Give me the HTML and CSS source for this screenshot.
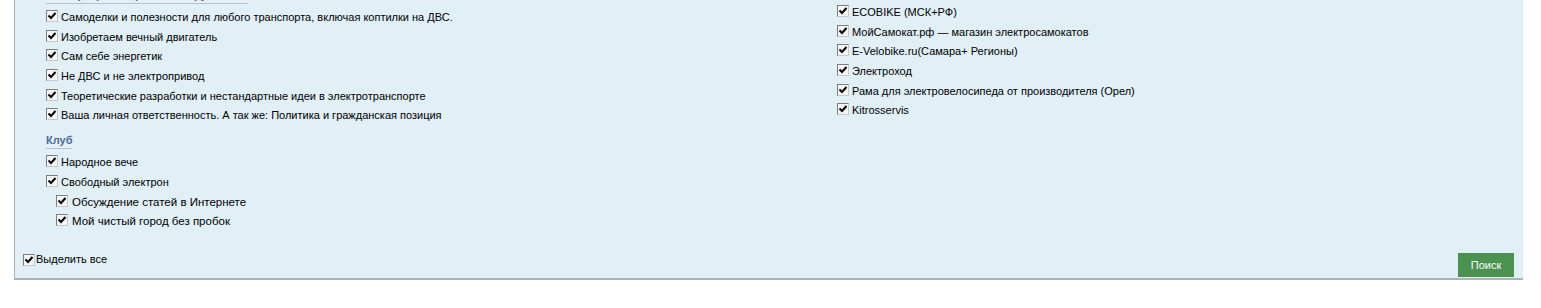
FILE: index.html
```html
<!DOCTYPE html>
<html>
<head>
  <title>Поиск по разделам</title>
  <link rel="stylesheet" href="styles.css">
</head>
<body>
  <form class="search-box">
    <div class="columns">
      <div class="col">
        <div class="group-title">Электротранспорт своими руками</div>
        <div class="group-list">
          <label class="row"><span class="check"><svg viewBox="0 0 10 10"><path d="M1.5 4.5 L4 7 L8.5 2"/></svg></span>Самоделки и полезности для любого транспорта, включая коптилки на ДВС.</label>
          <label class="row"><span class="check"><svg viewBox="0 0 10 10"><path d="M1.5 4.5 L4 7 L8.5 2"/></svg></span>Изобретаем вечный двигатель</label>
          <label class="row"><span class="check"><svg viewBox="0 0 10 10"><path d="M1.5 4.5 L4 7 L8.5 2"/></svg></span>Сам себе энергетик</label>
          <label class="row"><span class="check"><svg viewBox="0 0 10 10"><path d="M1.5 4.5 L4 7 L8.5 2"/></svg></span>Не ДВС и не электропривод</label>
          <label class="row"><span class="check"><svg viewBox="0 0 10 10"><path d="M1.5 4.5 L4 7 L8.5 2"/></svg></span>Теоретические разработки и нестандартные идеи в электротранспорте</label>
          <label class="row"><span class="check"><svg viewBox="0 0 10 10"><path d="M1.5 4.5 L4 7 L8.5 2"/></svg></span>Ваша личная ответственность. А так же: Политика и гражданская позиция</label>
        </div>

        <div class="group-title club">Клуб</div>
        <div class="group-list">
          <label class="row"><span class="check"><svg viewBox="0 0 10 10"><path d="M1.5 4.5 L4 7 L8.5 2"/></svg></span>Народное вече</label>
          <label class="row"><span class="check"><svg viewBox="0 0 10 10"><path d="M1.5 4.5 L4 7 L8.5 2"/></svg></span>Свободный электрон</label>
          <label class="row sub"><span class="check"><svg viewBox="0 0 10 10"><path d="M1.5 4.5 L4 7 L8.5 2"/></svg></span>Обсуждение статей в Интернете</label>
          <label class="row sub"><span class="check"><svg viewBox="0 0 10 10"><path d="M1.5 4.5 L4 7 L8.5 2"/></svg></span>Мой чистый город без пробок</label>
        </div>
      </div>

      <div class="col col-right">
        <div class="group-list">
          <label class="row"><span class="check"><svg viewBox="0 0 10 10"><path d="M1.5 4.5 L4 7 L8.5 2"/></svg></span>ECOBIKE (МСК+РФ)</label>
          <label class="row"><span class="check"><svg viewBox="0 0 10 10"><path d="M1.5 4.5 L4 7 L8.5 2"/></svg></span>МойСамокат.рф — магазин электросамокатов</label>
          <label class="row"><span class="check"><svg viewBox="0 0 10 10"><path d="M1.5 4.5 L4 7 L8.5 2"/></svg></span>E-Velobike.ru(Самара+ Регионы)</label>
          <label class="row"><span class="check"><svg viewBox="0 0 10 10"><path d="M1.5 4.5 L4 7 L8.5 2"/></svg></span>Электроход</label>
          <label class="row"><span class="check"><svg viewBox="0 0 10 10"><path d="M1.5 4.5 L4 7 L8.5 2"/></svg></span>Рама для электровелосипеда от производителя (Орел)</label>
          <label class="row"><span class="check"><svg viewBox="0 0 10 10"><path d="M1.5 4.5 L4 7 L8.5 2"/></svg></span>Kitrosservis</label>
        </div>
      </div>
    </div>

    <div class="footer">
      <label class="select-all"><span class="check"><svg viewBox="0 0 10 10"><path d="M1.5 4.5 L4 7 L8.5 2"/></svg></span>Выделить все</label>
      <button type="button" class="search-button">Поиск</button>
    </div>
  </form>
</body>
</html>
```

FILE: styles.css
```css
body {
  margin: 0;
  background-color: #fff;
  font-family: "Liberation Sans", Arial, sans-serif;
  font-size: 11px;
  color: #000;
  overflow: hidden;
}

.search-box {
  box-sizing: border-box;
  width: 1509px;
  margin: -20px 0 0 14px;
  padding: 8px 9px 1px 8px;
  background-color: #e1eff7;
  border-left: 1px solid #a9b3bb;
  border-bottom: 2px solid #a9b3bb;
}

.columns {
  display: grid;
  grid-template-columns: 791px 1fr;
  padding-left: 23px;
}

.group-title {
  display: inline-block;
  font-weight: bold;
  color: #4b6b9b;
  line-height: 14px;
  padding-bottom: 1px;
  border-bottom: 1px solid #b7c3cc;
  width: 202px;
}

.group-title.club {
  width: auto;
  margin-top: 8px;
}

.group-list {
  margin-top: 3px;
}

.col-right {
  padding-top: 11px;
}

.row {
  display: flex;
  align-items: flex-start;
  height: 19.7px;
  line-height: 20px;
  white-space: nowrap;
}

.row.sub {
  padding-left: 10px;
  font-size: 11.5px;
}

.check {
  box-sizing: border-box;
  display: inline-block;
  flex: none;
  width: 12px;
  height: 12px;
  margin: 3px 3px 0 0;
  border: 1px solid #7d7d7d;
  border-right-color: #c8c8c8;
  border-bottom-color: #c8c8c8;
  background-color: #f6f6f6;
}

.row.sub .check {
  margin-right: 4px;
}

.check svg {
  display: block;
  width: 10px;
  height: 10px;
}

.check path {
  fill: none;
  stroke: #000;
  stroke-width: 2;
}

.footer {
  display: flex;
  justify-content: space-between;
  align-items: flex-start;
  margin-top: 22px;
}

.select-all {
  display: flex;
  align-items: flex-start;
  line-height: 12px;
}

.select-all .check {
  margin: 1px 1px 0 0;
}

.search-button {
  width: 56px;
  height: 24px;
  padding: 0;
  border: none;
  background-color: #4b9150;
  color: #fff;
  font-family: "Liberation Sans", Arial, sans-serif;
  font-size: 11px;
  cursor: pointer;
}
```
